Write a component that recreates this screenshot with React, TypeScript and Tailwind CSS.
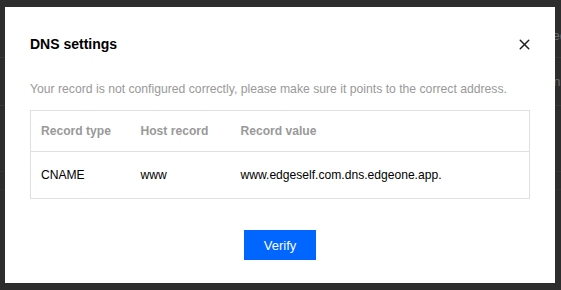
import { X } from "lucide-react";

const rows = [{ type: "CNAME", host: "www", value: "www.edgeself.com.dns.edgeone.app." }];

export default function App() {
  return (
    <div className="relative h-[290px] w-[561px] overflow-hidden bg-[#2d2d2e] font-['Liberation_Sans',Arial,sans-serif]">
      {/* page behind the overlay */}
      <div className="flex flex-col pt-[26px] text-[13px] text-[#6a6a6a]">
        <div className="flex h-[32px] items-start justify-end border-b border-[#383838]">
          <span className="-mr-[6px]">ed</span>
        </div>
        <div className="flex h-[48px] items-center justify-end border-b border-[#383838]">
          <span className="-mr-[6px]">ns</span>
        </div>
        <div className="h-[66px] border-b border-[#363636]" />
        <div className="h-[18px] border-b border-[#333333]" />
      </div>

      <div className="absolute left-[5px] top-[7px] flex h-[276px] w-[550px] flex-col bg-white px-[25px]">
        <div className="flex items-center justify-between pt-[27px]">
          <h2 className="text-[14px] font-bold text-black">DNS settings</h2>
          <button className="-mr-[3px] text-[#222]" aria-label="Close">
            <X className="h-[17px] w-[17px]" strokeWidth={2.1} />
          </button>
        </div>
        <p className="mt-[25px] text-[12.2px] text-[#999]">
          Your record is not configured correctly, please make sure it points to the correct address.
        </p>
        <table className="mt-[12px] w-full table-fixed border-collapse border border-[#dcdfe4] text-left text-[12.1px]">
          <thead>
            <tr className="h-[41px] border-b border-[#dcdfe4]">
              <th className="w-[110px] pl-[10px] font-bold text-[#999]">Record type</th>
              <th className="w-[100px] font-bold text-[#999]">Host record</th>
              <th className="font-bold text-[#999]">Record value</th>
            </tr>
          </thead>
          <tbody>
            {rows.map((r) => (
              <tr key={r.value} className="h-[47px]">
                <td className="pl-[10px] text-black">{r.type}</td>
                <td className="text-black">{r.host}</td>
                <td className="text-black">{r.value}</td>
              </tr>
            ))}
          </tbody>
        </table>
        <div className="mt-[31px] flex justify-center">
          <button className="h-[30px] w-[72px] bg-[#0066ff] text-[13px] text-white">Verify</button>
        </div>
      </div>
    </div>
  );
}
